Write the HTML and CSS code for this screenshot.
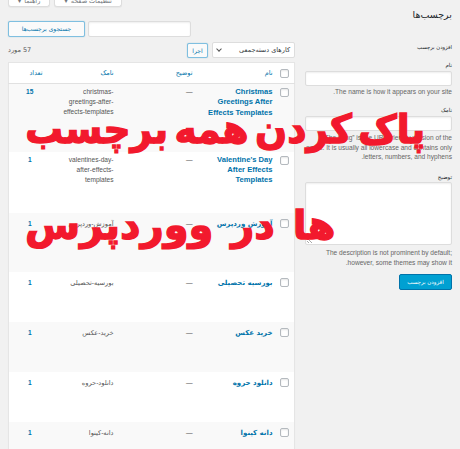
FILE: index.html
```html
<!DOCTYPE html>
<html lang="fa" dir="rtl">
<head>
<meta charset="utf-8">
<title>برچسب‌ها</title>
<link rel="stylesheet" href="styles.css">
</head>
<body>
<div class="screen-meta">
  <div class="tab">تنظیمات صفحه <span class="caret">▾</span></div>
  <div class="tab">راهنما <span class="caret">▾</span></div>
</div>
<div class="wrap">
  <div class="col-right">
    <h1 class="page-title">برچسب‌ها</h1>
    <h2 class="form-title">افزودن برچسب</h2>
    <div class="field">
      <label class="lbl">نام</label>
      <div class="input"></div>
      <p class="help">The name is how it appears on your site.</p>
    </div>
    <div class="field f-slug">
      <label class="lbl">نامک</label>
      <div class="input"></div>
      <p class="help">The “slug” is the URL-friendly version of the name. It is usually all lowercase and contains only letters, numbers, and hyphens.</p>
    </div>
    <div class="field f-desc">
      <label class="lbl">توضیح</label>
      <div class="textarea"><span class="grip"></span></div>
      <p class="help">The description is not prominent by default; however, some themes may show it.</p>
    </div>
    <div class="btn-primary">افزودن برچسب</div>
  </div>
  <div class="col-left">
    <div class="search-box">
      <div class="input search-input"></div>
      <div class="btn btn-focus">جستجوی برچسب‌ها</div>
    </div>
    <div class="tablenav">
      <div class="bulk">
        <div class="select"><span>کارهای دسته‌جمعی</span><span class="chev"></span></div>
        <div class="btn btn-focus btn-apply">اجرا</div>
      </div>
      <div class="count">57 مورد</div>
    </div>
    <table class="tags">
      <thead>
        <tr>
          <th class="c-cb"><span class="cb"></span></th>
          <th class="c-name">نام</th>
          <th class="c-desc">توضیح</th>
          <th class="c-slug">نامک</th>
          <th class="c-count">تعداد</th>
        </tr>
      </thead>
      <tbody>
        <tr class="alt r1">
          <td class="c-cb"><span class="cb"></span></td>
          <td class="c-name"><a class="name en">Christmas Greetings After Effects Templates</a></td>
          <td class="c-desc">—</td>
          <td class="c-slug">christmas-greetings-after-effects-templates</td>
          <td class="c-count"><a>15</a></td>
        </tr>
        <tr class="r2">
          <td class="c-cb"><span class="cb"></span></td>
          <td class="c-name"><a class="name en">Valentine's Day After Effects Templates</a></td>
          <td class="c-desc">—</td>
          <td class="c-slug">valentines-day-after-effects-templates</td>
          <td class="c-count"><a>1</a></td>
        </tr>
        <tr class="alt r3">
          <td class="c-cb"><span class="cb"></span></td>
          <td class="c-name"><a class="name fa">آموزش وردپرس</a></td>
          <td class="c-desc">—</td>
          <td class="c-slug">آموزش-وردپرس</td>
          <td class="c-count"><a>1</a></td>
        </tr>
        <tr class="r4">
          <td class="c-cb"><span class="cb"></span></td>
          <td class="c-name"><a class="name fa">بورسیه تحصیلی</a></td>
          <td class="c-desc">—</td>
          <td class="c-slug">بورسیه-تحصیلی</td>
          <td class="c-count"><a>1</a></td>
        </tr>
        <tr class="alt r4">
          <td class="c-cb"><span class="cb"></span></td>
          <td class="c-name"><a class="name fa">خرید عکس</a></td>
          <td class="c-desc">—</td>
          <td class="c-slug">خرید-عکس</td>
          <td class="c-count"><a>1</a></td>
        </tr>
        <tr class="r4">
          <td class="c-cb"><span class="cb"></span></td>
          <td class="c-name"><a class="name fa">دانلود حروه</a></td>
          <td class="c-desc">—</td>
          <td class="c-slug">دانلود-حروه</td>
          <td class="c-count"><a>1</a></td>
        </tr>
        <tr class="alt r4">
          <td class="c-cb"><span class="cb"></span></td>
          <td class="c-name"><a class="name fa">دانه کینوا</a></td>
          <td class="c-desc">—</td>
          <td class="c-slug">دانه-کینوا</td>
          <td class="c-count"><a>1</a></td>
        </tr>
      </tbody>
    </table>
  </div>
</div>
<div class="overlay">
  <div class="ov-line ov-1">پاک کردن همه برچسب</div>
  <div class="ov-line ov-2">ها در ووردپرس</div>
</div>
</body>
</html>
```
FILE: styles.css
```css
* { box-sizing: border-box; }
html, body { margin: 0; padding: 0; }
body {
  width: 460px;
  height: 449px;
  overflow: hidden;
  position: relative;
  direction: rtl;
  background: #f1f1f1;
  color: #444;
  font-family: "Liberation Sans", "DejaVu Sans", sans-serif;
  font-size: 7px;
  line-height: 10px;
}

/* top tabs */
.screen-meta {
  display: flex;
  justify-content: flex-end;
  gap: 4px;
  height: 8px;
  padding-left: 8px;
}
.tab {
  margin-top: -11px;
  height: 18px;
  padding: 0 6px 1px;
  display: flex;
  align-items: flex-end;
  gap: 3px;
  background: #fff;
  border: 1px solid #ddd;
  border-top: 0;
  border-radius: 0 0 3px 3px;
  box-shadow: 0 1px 1px rgba(0,0,0,.04);
  color: #72777c;
  font-size: 6.5px;
  line-height: 8px;
}
.tab:first-child { width: 68px; justify-content: center; }
.tab:last-child { width: 42px; justify-content: center; }
.caret { font-size: 7px; color: #72777c; }

.wrap {
  display: grid;
  grid-template-columns: 147px 287px;
  column-gap: 10px;
  padding: 0 8px;
  align-items: start;
}

/* right column: form */
.col-right { display: flex; flex-direction: column; }
.page-title {
  margin: 0;
  height: 14px;
  font-size: 9.5px;
  line-height: 14px;
  font-weight: normal;
  color: #23282d;
  font-family: "DejaVu Sans", sans-serif;
}
.form-title {
  margin: 20px 0 0;
  font-size: 5.3px;
  line-height: 10px;
  font-weight: normal;
  color: #23282d;
  font-family: "DejaVu Sans", sans-serif;
}
.field { display: flex; flex-direction: column; }
.lbl {
  margin-top: 8px;
  font-size: 5.5px;
  line-height: 10px;
  color: #23282d;
  font-family: "DejaVu Sans", sans-serif;
}
.input {
  margin-top: 1px;
  height: 15px;
  background: #fff;
  border: 1px solid #ddd;
  border-radius: 2px;
  box-shadow: inset 0 1px 2px rgba(0,0,0,.07);
}
.help {
  margin: 1px 0 0;
  color: #666;
  font-size: 6.6px;
  line-height: 9.8px;
}
.f-slug .help { margin-top: 2px; }
.f-desc .lbl { margin-top: 10px; }
.textarea {
  position: relative;
  height: 63px;
  background: #fff;
  border: 1px solid #ddd;
  border-radius: 2px;
  box-shadow: inset 0 1px 2px rgba(0,0,0,.07);
}
.grip {
  position: absolute;
  left: 1px;
  bottom: 1px;
  width: 7px;
  height: 7px;
  background: repeating-linear-gradient(45deg, transparent 0 1px, #aaa 1px 2px);
  clip-path: polygon(0 0, 0 100%, 100% 100%);
}
.f-desc .help { margin-top: 3px; }
.btn-primary {
  align-self: flex-start;
  margin-top: 6px;
  width: 53px;
  height: 16px;
  background: #00a0d2;
  border: 1px solid #0073aa;
  border-radius: 2px;
  color: #fff;
  font-family: "DejaVu Sans", sans-serif;
  font-size: 5.5px;
  line-height: 14px;
  text-align: center;
}

/* left column */
.col-left { display: flex; flex-direction: column; }
.search-box {
  margin-top: 13px;
  display: flex;
  justify-content: flex-end;
  gap: 3px;
}
.search-input { margin-top: 0; width: 103px; height: 16px; }
.btn {
  height: 16px;
  background: #f7f7f7;
  border: 1px solid #ccc;
  border-radius: 2px;
  color: #555;
  font-family: "DejaVu Sans", sans-serif;
  font-size: 6px;
  line-height: 14px;
  text-align: center;
}
.btn-focus {
  border-color: #7fbfe0;
  color: #0073aa;
  background: #fafafa;
  box-shadow: 0 0 1px rgba(30,140,190,.5);
}
.search-box .btn { width: 77px; }
.tablenav {
  margin-top: 5px;
  display: flex;
  justify-content: space-between;
  align-items: center;
  height: 16px;
}
.bulk { display: flex; gap: 4px; align-items: center; }
.select {
  width: 83px;
  height: 16px;
  background: #fff;
  border: 1px solid #ddd;
  border-radius: 2px;
  display: flex;
  justify-content: space-between;
  align-items: center;
  padding: 0 4px;
  font-family: "DejaVu Sans", sans-serif;
  font-size: 6.5px;
  color: #32373c;
}
.chev {
  width: 4px;
  height: 4px;
  border-right: 1px solid #555;
  border-bottom: 1px solid #555;
  transform: translateY(-1px) rotate(45deg);
}
.btn-apply { width: 21px; height: 15px; }
.count {
  font-size: 6.5px;
  color: #555;
  font-family: "DejaVu Sans", sans-serif;
}

/* table */
.tags {
  margin-top: 4px;
  width: 287px;
  border-collapse: collapse;
  table-layout: fixed;
  background: #fff;
  border: 1px solid #e5e5e5;
  box-shadow: 0 1px 1px rgba(0,0,0,.04);
}
.tags th {
  height: 21px;
  border-bottom: 1px solid #e1e1e1;
  font-weight: normal;
  font-family: "DejaVu Sans", sans-serif;
  font-size: 6.5px;
  color: #0073aa;
  text-align: right;
  padding: 0 3px;
  vertical-align: middle;
}
.tags td {
  vertical-align: top;
  text-align: right;
  padding: 3px 3px 0;
  color: #555;
  font-size: 6.6px;
  line-height: 10px;
}
.tags tr.alt td { background: #f9f9f9; }
.c-cb { width: 19px; }
.c-name { width: 80px; }
.c-desc { width: 79px; }
.c-slug { width: 70px; }
.tags td.c-name { padding-left: 10px; }
.tags td.c-slug { padding-left: 12px; }
.tags th.c-count { padding-right: 4px; }
.tags td.c-count { text-align: center; padding-right: 0; padding-left: 4px; }
.tags td.c-count a { color: #0073aa; font-weight: bold; }
.tags .c-cb { padding: 0 5px 0 0; }
.tags td.c-cb { padding-top: 4px; }
.cb {
  display: block;
  width: 9px;
  height: 9px;
  background: #fff;
  border: 1px solid #b4b9be;
  border-radius: 2px;
  box-shadow: inset 0 1px 2px rgba(0,0,0,.1);
}
.name { color: #0073aa; font-weight: bold; }
.name.en { font-size: 7.6px; line-height: 10.3px; }
.name.fa { font-family: "DejaVu Sans", sans-serif; font-size: 7px; }
.c-slug { word-wrap: break-word; }
.tags tr.r1 td { height: 68px; }
.tags tr.r2 td { height: 61px; }
.tags tr.r3 td { height: 59px; }
.tags tr.r4 td { height: 50px; }
.tags tr.r4 td, .tags tr.r3 td { padding-top: 6px; }

/* overlay title */
.overlay {
  position: absolute;
  left: 25px;
  top: 81px;
  width: 400px;
  direction: rtl;
  text-align: left;
  color: #f2192d;
  -webkit-text-stroke: 1.4px #f2192d;
  font-family: "DejaVu Sans", sans-serif;
  font-weight: bold;
  font-size: 40px;
  line-height: 96px;
  white-space: nowrap;
}
.ov-line { transform-origin: right center; }
.ov-1 { word-spacing: -7px; transform: scaleX(0.94); }
.ov-2 { word-spacing: 4px; transform-origin: left center; }
```
